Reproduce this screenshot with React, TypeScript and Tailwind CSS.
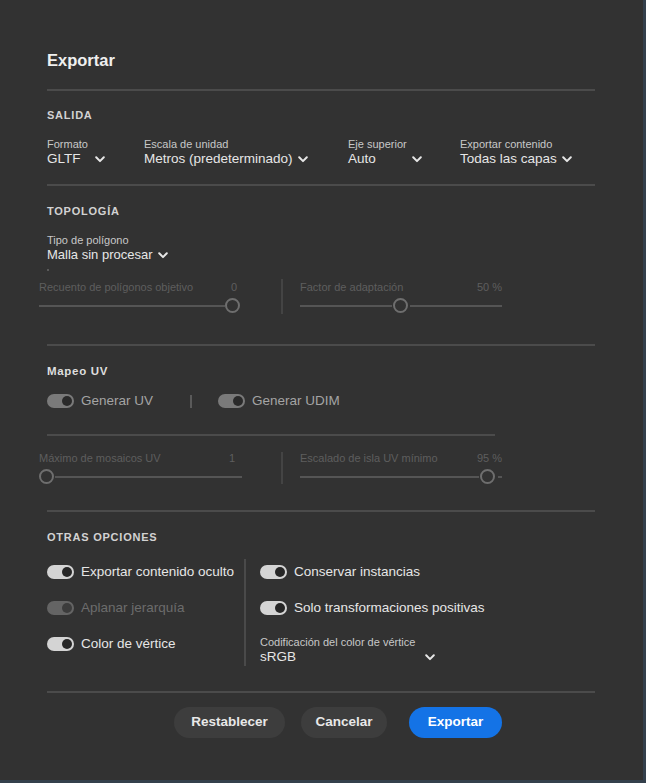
import React from "react";

const FONT = { fontFamily: '"Liberation Sans", Arial, sans-serif' };

function Chevron({ className = "" }: { className?: string }) {
  return (
    <svg width="10" height="7" viewBox="0 0 10 7" className={className}>
      <path d="M1.2 1.3 5 5.1 8.8 1.3" fill="none" stroke="#e6e6e6" strokeWidth="2" strokeLinecap="round" strokeLinejoin="round" />
    </svg>
  );
}

function Divider({ className = "" }: { className?: string }) {
  return <div className={`h-[2px] bg-[#4b4b4b] ${className}`} />;
}

function SectionTitle({ children, className = "" }: { children: React.ReactNode; className?: string }) {
  return (
    <div className={`text-[11px] leading-[14px] font-bold tracking-[0.07em] text-[#d2d2d2] ${className}`}>
      {children}
    </div>
  );
}

function Picker({ label, value, width }: { label: string; value: string; width: string }) {
  return (
    <div className="flex flex-col">
      <div className="text-[11px] leading-[13px] text-[#c8c8c8]">{label}</div>
      <div className={`flex items-center justify-between ${width}`}>
        <span className="text-[13.5px] leading-[16px] text-[#e6e6e6]">{value}</span>
        <Chevron />
      </div>
    </div>
  );
}

type ToggleTone = "on" | "dim" | "off";

function Toggle({ tone, label }: { tone: ToggleTone; label: string }) {
  const track = tone === "on" ? "bg-[#d4d4d4]" : tone === "dim" ? "bg-[#7a7a7a]" : "bg-[#646464]";
  const knob = tone === "on" ? "bg-[#262626]" : tone === "dim" ? "bg-[#2a2a2a]" : "bg-[#3c3c3c]";
  const text = tone === "on" ? "text-[#e6e6e6]" : tone === "dim" ? "text-[#a4a4a4]" : "text-[#6c6c6c]";
  return (
    <div className="flex items-center h-[16px]">
      <div className={`relative w-[27px] h-[14px] rounded-full ${track}`}>
        <div className={`absolute right-[2px] top-[2px] w-[10px] h-[10px] rounded-full ${knob}`} />
      </div>
      <span className={`ml-[7px] text-[13.5px] leading-[16px] ${text}`}>{label}</span>
    </div>
  );
}

function Thumb() {
  return <div className="w-[15px] h-[15px] shrink-0 rounded-full border-2 border-[#6e6e6e]" />;
}

function Track({ className = "" }: { className?: string }) {
  return <div className={`h-[2px] bg-[#555555] ${className}`} />;
}

function SliderLabel({ label, value, width }: { label: string; value: string; width: string }) {
  return (
    <div className={`flex justify-between text-[11px] leading-[13px] text-[#5e5e5e] ${width}`}>
      <span>{label}</span>
      <span>{value}</span>
    </div>
  );
}

export default function App() {
  return (
    <div className="w-[646px] h-[783px] bg-[#34404c]" style={FONT}>
      <div className="w-[643px] h-[780px] bg-[#323232] pl-[47px] pt-[50px] flex flex-col">
        <div className="text-[16.5px] leading-[20px] font-bold text-[#efefef]">Exportar</div>
        <Divider className="w-[548px] mt-[19px]" />

        <SectionTitle className="mt-[17px]">SALIDA</SectionTitle>
        <div className="flex mt-[16px]">
          <div className="w-[97px]"><Picker label="Formato" value="GLTF" width="w-[58px]" /></div>
          <div className="w-[204px]"><Picker label="Escala de unidad" value="Metros (predeterminado)" width="w-[164px]" /></div>
          <div className="w-[112px]"><Picker label="Eje superior" value="Auto" width="w-[74px]" /></div>
          <div><Picker label="Exportar contenido" value="Todas las capas" width="w-[112px]" /></div>
        </div>
        <Divider className="w-[548px] mt-[17px]" />

        <SectionTitle className="mt-[18px]">TOPOLOGÍA</SectionTitle>
        <div className="mt-[15px] text-[11px] leading-[14px] text-[#c8c8c8]">Tipo de polígono</div>
        <div className="flex items-center">
          <span className="text-[13px] leading-[16px] text-[#e6e6e6]">Malla sin procesar</span>
          <Chevron className="ml-[5px]" />
        </div>
        <div className="mt-[6px] w-[2px] h-[2px] bg-[#5a5a5a]" />

        <div className="flex mt-[8px] -ml-[8px] h-[35px]">
          <div className="w-[201px] flex flex-col pt-[2px]">
            <SliderLabel label="Recuento de polígonos objetivo" value="0" width="w-[198px]" />
            <div className="flex items-center mt-[4px]">
              <Track className="w-[187px]" />
              <Thumb />
            </div>
          </div>
          <div className="w-[2px] bg-[#444444] ml-[41px]" />
          <div className="w-[202px] ml-[17px] flex flex-col pt-[2px]">
            <SliderLabel label="Factor de adaptación" value="50 %" width="w-[202px]" />
            <div className="flex items-center mt-[4px]">
              <Track className="w-[92px] mr-[1px]" />
              <Thumb />
              <Track className="flex-1 ml-[2px]" />
            </div>
          </div>
        </div>

        <Divider className="w-[548px] mt-[30px]" />
        <div className="mt-[18px] text-[11.5px] leading-[14px] font-bold tracking-[0.06em] text-[#dedede]">Mapeo UV</div>
        <div className="flex items-center mt-[15px]">
          <Toggle tone="dim" label="Generar UV" />
          <div className="w-[2px] h-[13px] bg-[#5a5a5a] ml-[37px]" />
          <div className="ml-[26px]"><Toggle tone="dim" label="Generar UDIM" /></div>
        </div>
        <Divider className="w-[448px] mt-[25px]" />

        <div className="flex mt-[16px] -ml-[8px] h-[32px]">
          <div className="w-[203px] flex flex-col">
            <SliderLabel label="Máximo de mosaicos UV" value="1" width="w-[196px]" />
            <div className="flex items-center mt-[4px]">
              <Thumb />
              <Track className="flex-1 ml-[1px]" />
            </div>
          </div>
          <div className="w-[2px] bg-[#444444] ml-[39px]" />
          <div className="w-[202px] ml-[17px] flex flex-col">
            <SliderLabel label="Escalado de isla UV mínimo" value="95 %" width="w-[202px]" />
            <div className="flex items-center mt-[4px]">
              <Track className="w-[179px] mr-[1px]" />
              <Thumb />
              <Track className="w-[4px] ml-[3px]" />
            </div>
          </div>
        </div>

        <Divider className="w-[548px] mt-[26px]" />
        <SectionTitle className="mt-[18px]">OTRAS OPCIONES</SectionTitle>

        <div className="flex mt-[13px]">
          <div className="w-[197px] flex flex-col pt-[7px] gap-[19px]">
            <Toggle tone="on" label="Exportar contenido oculto" />
            <div className="mt-[1px]"><Toggle tone="off" label="Aplanar jerarquía" /></div>
            <div className="mt-[1px]"><Toggle tone="on" label="Color de vértice" /></div>
          </div>
          <div className="w-[2px] h-[107px] mt-[2px] bg-[#4a4a4a]" />
          <div className="ml-[14px] flex flex-col pt-[7px]">
            <Toggle tone="on" label="Conservar instancias" />
            <div className="mt-[20px]"><Toggle tone="on" label="Solo transformaciones positivas" /></div>
            <div className="mt-[19px] text-[11px] leading-[14px] text-[#c8c8c8]">Codificación del color de vértice</div>
            <div className="flex items-center justify-between w-[175px]">
              <span className="text-[13.5px] leading-[16px] text-[#e6e6e6]">sRGB</span>
              <Chevron />
            </div>
          </div>
        </div>

        <Divider className="w-[548px] mt-[25px]" />
        <div className="flex mt-[14px] pl-[127px]">
          <button className="w-[111px] h-[31px] rounded-full bg-[#3d3d3d] text-[13.5px] font-bold text-[#e8e8e8]">Restablecer</button>
          <button className="w-[86px] h-[31px] ml-[16px] rounded-full bg-[#3d3d3d] text-[13.5px] font-bold text-[#e8e8e8]">Cancelar</button>
          <button className="w-[93px] h-[31px] ml-[22px] rounded-full bg-[#1473e6] text-[13.5px] font-bold text-white">Exportar</button>
        </div>
      </div>
    </div>
  );
}
